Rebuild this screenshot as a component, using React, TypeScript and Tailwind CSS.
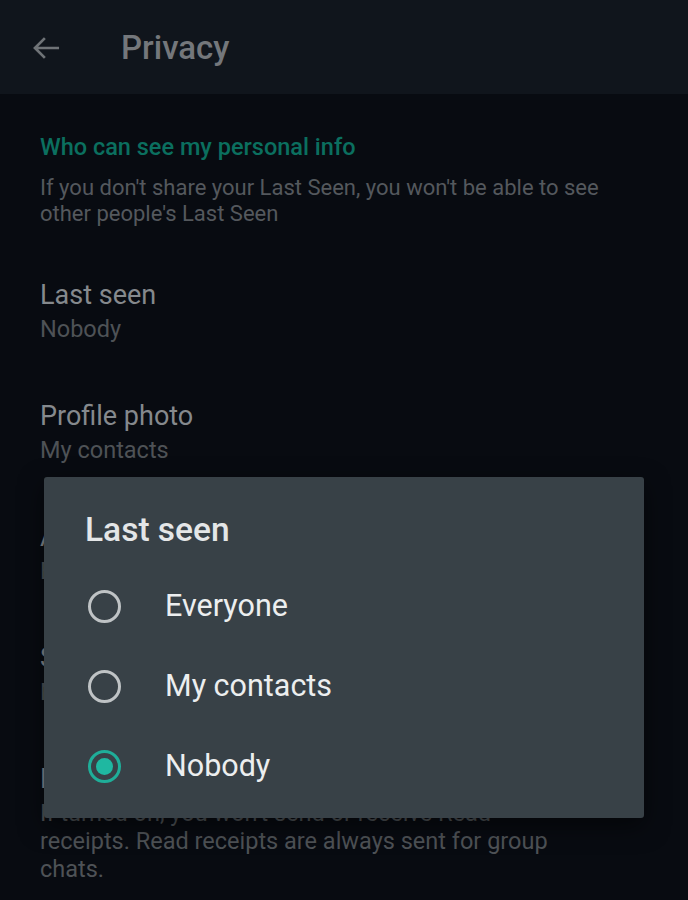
import React from "react";

const rows = [
  { title: "Last seen", value: "Nobody" },
  { title: "Profile photo", value: "My contacts" },
  { title: "About", value: "Everyone" },
  { title: "Status", value: "My contacts" },
];

const options = ["Everyone", "My contacts", "Nobody"];

function Radio({ checked }: { checked: boolean }) {
  return (
    <div
      className={
        checked
          ? "flex h-[33px] w-[33px] items-center justify-center rounded-full border-[3px] border-[#1fae99]"
          : "h-[33px] w-[33px] rounded-full border-[3px] border-[#bfc3c5]"
      }
    >
      {checked && <div className="h-[17px] w-[17px] rounded-full bg-[#1fb8a1]" />}
    </div>
  );
}

export default function App() {
  const selected = "Nobody";

  return (
    <div
      className="relative h-[900px] w-[688px] overflow-hidden bg-[#080b11]"
      style={{ fontFamily: "Roboto, 'Noto Sans', sans-serif" }}
    >
      {/* Toolbar */}
      <div className="flex h-[94px] items-center bg-[#10151c] pt-[2px]">
        <svg className="ml-[30px] h-[34px] w-[34px]" viewBox="0 0 24 24" fill="none">
          <path d="M20.5 12H3.5M10.5 5l-7 7 7 7" stroke="#6f7377" strokeWidth="1.9" />
        </svg>
        <span className="ml-[57px] text-[33px] leading-[40px] font-medium text-[#74777b]">Privacy</span>
      </div>

      {/* Settings list (dimmed behind dialog) */}
      <div className="pl-[40px]">
        <div className="pt-[39px] text-[23.5px] leading-[28px] font-medium text-[#0b6f5f]">
          Who can see my personal info
        </div>
        <p className="mt-[14px] w-[580px] text-[22px] leading-[26px] text-[#54585d]">
          If you don't share your Last Seen, you won't be able to see other people's Last Seen
        </p>

        <div className="mt-[23px]">
          {rows.map((row) => (
            <div key={row.title} className="h-[121px] pt-[30px]">
              <div className="text-[27px] leading-[30px] text-[#85898d]">{row.title}</div>
              <div className="mt-[5px] text-[23.5px] leading-[28px] text-[#4e5256]">{row.value}</div>
            </div>
          ))}
          <div className="pt-[30px]">
            <div className="text-[27px] leading-[30px] text-[#85898d]">Read receipts</div>
            <p className="mt-[5px] w-[540px] text-[23.5px] leading-[28px] text-[#4e5256]">
              If turned on, you won't send or receive Read receipts. Read receipts are always sent for group chats.
            </p>
          </div>
        </div>
      </div>

      {/* Dialog */}
      <div className="absolute left-[44px] top-[477px] h-[341px] w-[600px] rounded-[3px] bg-[#384147] shadow-[0_8px_24px_rgba(0,0,0,0.5)]">
        <div className="pl-[41px] pt-[34px] text-[33.5px] leading-[38px] font-medium text-[#e4e6e7]">
          Last seen
        </div>
        <div className="mt-[17px]">
          {options.map((opt) => (
            <div key={opt} className="flex h-[80px] items-center pl-[44px]">
              <Radio checked={opt === selected} />
              <span className="ml-[44px] text-[30.5px] text-[#eceeef]">{opt}</span>
            </div>
          ))}
        </div>
      </div>
    </div>
  );
}
